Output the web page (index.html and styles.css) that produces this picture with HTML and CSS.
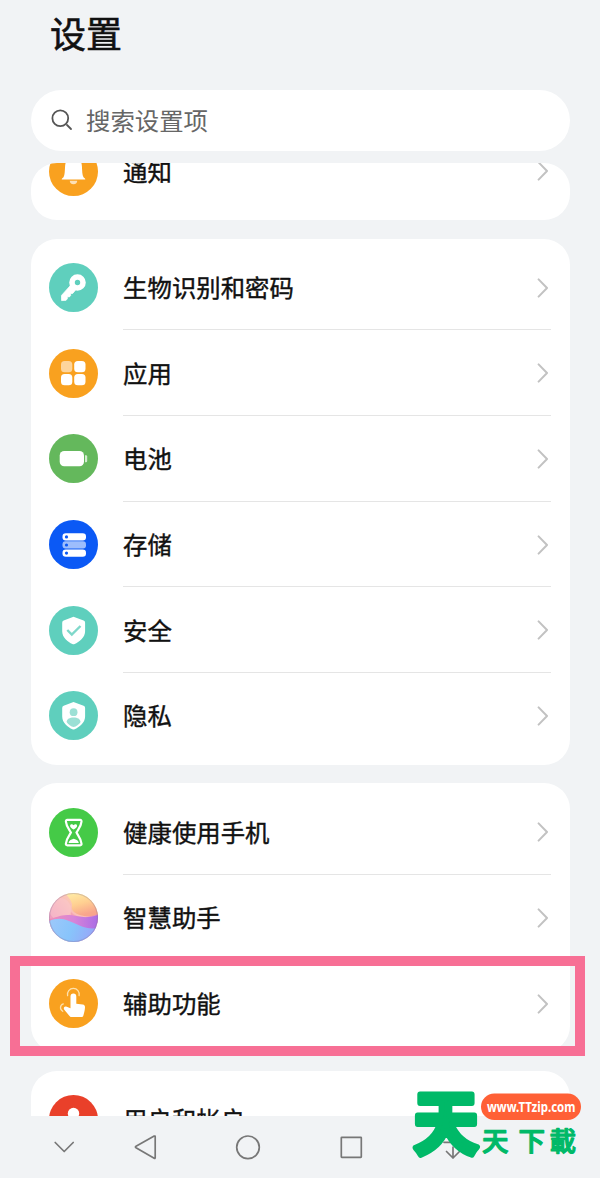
FILE: index.html
```html
<!DOCTYPE html>
<html lang="zh-CN">
<head>
<meta charset="utf-8">
<title>设置</title>
<link rel="stylesheet" href="styles.css">
</head>
<body>
<svg class="defs" aria-hidden="true">
  <symbol id="chevron" viewBox="0 0 12 20"><path d="M1.600 1.400 10 10 1.600 18.600" fill="none" stroke="#c2c2c2" stroke-width="2" stroke-linecap="round" stroke-linejoin="round"/></symbol>
</svg>
<div class="screen">
  <h1 class="title">设置</h1>
  <div class="search">
    <svg class="search-icon" viewBox="0 0 22 22"><circle cx="9.300" cy="9.300" r="7.900"/><path d="m16 16 4 4"/></svg>
    <span>搜索设置项</span>
  </div>
  <main class="list">
    <section class="card card-clipped">
      <div class="row">
        <svg class="icon" viewBox="0 0 49 49"><circle cx="24.500" cy="24.500" r="24.500" fill="#f9a11f"/><path d="M24.500 10c-6 0-8 4-8.400 9-.3 5-.3 9-1.600 11.200-.7 1-1.800 1.100-1.800 2.300h23.600c0-1.200-1.100-1.300-1.800-2.300C33.200 28 33.200 24 32.900 19c-.4-5-2.400-9-8.400-9z" fill="#fff"/><path d="M20.800 33.800h7.400a3.700 3.400 0 0 1-7.400 0z" fill="#fde0b5"/></svg>
        <div class="label"><span>通知</span><svg class="chevron"><use href="#chevron"/></svg></div>
      </div>
    </section>
    <section class="card">
      <div class="row">
        <svg class="icon" viewBox="0 0 49 49"><circle cx="24.500" cy="24.500" r="24.500" fill="#5fcfbd"/><circle cx="28.500" cy="19.500" r="5.500" fill="none" stroke="#fff" stroke-width="5.600"/><path d="m22.100 21.800-9.600 10.600.1 5.200 4.500-.3 1.300-1.700-.2-1.900 2.200.2 1.300-1.500-.2-2 2.100.1 2.800-3.300z" fill="#fff" stroke="#fff" stroke-width=".8" stroke-linejoin="round"/></svg>
        <div class="label"><span>生物识别和密码</span><svg class="chevron"><use href="#chevron"/></svg></div>
      </div>
      <div class="row">
        <svg class="icon" viewBox="0 0 49 49"><circle cx="24.500" cy="24.500" r="24.500" fill="#f9a11f"/><g fill="#fff"><rect x="12" y="12" width="11.300" height="11.300" rx="3.600" fill="#fdd59c"/><rect x="25.200" y="12" width="11.300" height="11.300" rx="3.600"/><rect x="12" y="25" width="11.300" height="11.300" rx="3.600"/><rect x="25.200" y="25" width="11.300" height="11.300" rx="3.600"/></g></svg>
        <div class="label"><span>应用</span><svg class="chevron"><use href="#chevron"/></svg></div>
      </div>
      <div class="row">
        <svg class="icon" viewBox="0 0 49 49"><circle cx="24.500" cy="24.500" r="24.500" fill="#64b85c"/><rect x="10.700" y="17" width="24.300" height="15.300" rx="4.500" fill="#fff"/><path d="M36 21.200h1q1.200 0 1.200 1.200v4.600q0 1.200-1.200 1.200h-1z" fill="#d3ebd0"/></svg>
        <div class="label"><span>电池</span><svg class="chevron"><use href="#chevron"/></svg></div>
      </div>
      <div class="row">
        <svg class="icon" viewBox="0 0 49 49"><circle cx="24.500" cy="24.500" r="24.500" fill="#0b59f5"/><rect x="13.500" y="13.200" width="23.500" height="7.300" rx="3.300" fill="#fff"/><rect x="13.500" y="21.300" width="23.500" height="7.300" rx="3" fill="#9dbdfc"/><rect x="13.500" y="29.500" width="23.500" height="7.300" rx="3.300" fill="#fff"/><g fill="#0b59f5"><circle cx="17.500" cy="16.900" r="1.600"/><circle cx="17.500" cy="25" r="1.600"/><circle cx="17.500" cy="33.100" r="1.600"/></g></svg>
        <div class="label"><span>存储</span><svg class="chevron"><use href="#chevron"/></svg></div>
      </div>
      <div class="row">
        <svg class="icon" viewBox="0 0 49 49"><circle cx="24.500" cy="24.500" r="24.500" fill="#5fcfbd"/><path d="M24.500 10.800 34.600 14.500q1.500.6 1.500 2.200v8.500c0 6.300-6 10.800-10.500 12.800q-1.100.5-2.200 0C19 36 13.200 31.500 13.200 25.200v-8.500q0-1.600 1.500-2.200z" fill="#fff"/><path d="m18.300 24 4.500 4.500 8.700-8.500" fill="none" stroke="#7fd8ca" stroke-width="2.400"/></svg>
        <div class="label"><span>安全</span><svg class="chevron"><use href="#chevron"/></svg></div>
      </div>
      <div class="row">
        <svg class="icon" viewBox="0 0 49 49"><circle cx="24.500" cy="24.500" r="24.500" fill="#5fcfbd"/><path d="M24.500 11 34.600 14.700q1.500.6 1.500 2.200v8.500c0 6.300-6 10.800-10.500 12.800q-1.100.5-2.200 0C19 36.200 13.200 31.700 13.200 25.400v-8.500q0-1.600 1.500-2.200z" fill="#fff"/><g fill="#9be0d5"><circle cx="24.600" cy="21.200" r="3.900"/><path d="M24.600 26.500c4 0 6.700 1.500 7 4.400-1.500 2.500-4.500 4.600-7 5.200-2.500-.6-5.500-2.700-7-5.200.3-2.900 3-4.400 7-4.400z"/></g></svg>
        <div class="label"><span>隐私</span><svg class="chevron"><use href="#chevron"/></svg></div>
      </div>
    </section>
    <section class="card">
      <div class="row">
        <svg class="icon" viewBox="0 0 49 49"><circle cx="24.500" cy="24.500" r="24.500" fill="#45ca47"/><path d="M18.300 11.900h12.800q1.600 0 1.400 1.700c-.5 5.400-3.500 7.900-5 11 1.500 3.100 4.500 5.500 5 11q.2 1.700-1.400 1.700H18.300q-1.600 0-1.400-1.700c.5-5.500 3.500-7.900 5-11-1.500-3.100-4.500-5.600-5-11q-.2-1.700 1.400-1.700z" fill="none" stroke="#fff" stroke-width="2.200"/><path d="M24.600 21.600c-1.800-1.200-3.800-2.500-3.500-4.200.4-1.600 2.500-1.600 3.500-.2 1-1.400 3.100-1.400 3.500.2.300 1.700-1.700 3-3.500 4.200zM19.600 34.900c.2-2.200 2.200-3.400 5.100-4.200 2.900.8 4.900 2 5.100 4.200z" fill="#fff"/></svg>
        <div class="label"><span>健康使用手机</span><svg class="chevron"><use href="#chevron"/></svg></div>
      </div>
      <div class="row">
        <svg class="icon" viewBox="0 0 49 49">
          <defs>
            <linearGradient id="warm" x1="0" y1=".7" x2=".8" y2="0"><stop offset=".2" stop-color="#f09fc0"/><stop offset=".6" stop-color="#fbc3b8"/><stop offset="1" stop-color="#ffe89c"/></linearGradient>
            <linearGradient id="sun" x1="0" y1="0" x2=".4" y2="1"><stop offset="0" stop-color="#fff0a8"/><stop offset=".55" stop-color="#ffcf91"/><stop offset="1" stop-color="#f8a58c"/></linearGradient>
            <linearGradient id="violet" x1="0" y1="0" x2="1" y2="0"><stop offset="0" stop-color="#f08fb8"/><stop offset=".5" stop-color="#d884d8"/><stop offset="1" stop-color="#aa6ce6"/></linearGradient>
            <linearGradient id="blue" x1="0" y1=".2" x2="1" y2=".4"><stop offset="0" stop-color="#9cc8fa"/><stop offset=".5" stop-color="#88c4fb"/><stop offset="1" stop-color="#98a4f8"/></linearGradient>
            <linearGradient id="coral" x1="0" y1="0" x2="1" y2="0"><stop offset=".3" stop-color="#f4a3b4"/><stop offset="1" stop-color="#e98bb4"/></linearGradient>
            <clipPath id="disc"><circle cx="24.500" cy="24.500" r="24.500"/></clipPath>
          </defs>
          <g clip-path="url(#disc)"><path d="M0 0h49v49H0z" fill="url(#warm)"/><circle cx="11" cy="16" r="11" fill="#fac9cd" opacity=".55"/><path d="M16 0h33v22c-8 2-18 2-24-3-3-3-2-5-2-8-1-4-4-8-7-11z" fill="url(#sun)"/><path d="M22 19c5 6 16 6 27 2v10H22z" fill="url(#coral)"/><path d="M0 26c6-1 11-4 18-4 11 0 16 5 31 0v19H0z" fill="url(#violet)"/><path d="M0 28c7-3 13-3 20 0 10 4 17 9 29 7v14H0z" fill="url(#blue)"/></g><circle cx="24.500" cy="24.500" r="24" fill="none" stroke="#85759b" stroke-opacity=".35"/>
        </svg>
        <div class="label"><span>智慧助手</span><svg class="chevron"><use href="#chevron"/></svg></div>
      </div>
      <div class="row row-selected">
        <svg class="icon" viewBox="0 0 49 49"><circle cx="24.500" cy="24.500" r="24.500" fill="#f9a11f"/><path d="M21.500 29.300V17.400a2.900 2.900 0 0 1 5.800 0v7.300l6.400.8c1.700.3 2.400 1.300 2.300 3-.2 3.400-.9 5.300-1.700 8.200-.3 1-1 1.400-2 1.400H22.500c-1.100 0-1.500-.5-2.200-1.300l-5-6c-1.200-1.700-.2-3.400 1.800-3.200z" fill="#fff"/><g fill="none" stroke="#fde0ad" stroke-width="1.300" stroke-linecap="round"><path d="M18.600 16.600a5.900 5.900 0 1 1 11.500 0M14.300 24.800c-3.300.9-3.900 5.500-.6 7.500"/></g></svg>
        <div class="label"><span>辅助功能</span><svg class="chevron"><use href="#chevron"/></svg></div>
        <div class="highlight"></div>
      </div>
    </section>
    <section class="card">
      <div class="row">
        <svg class="icon" viewBox="0 0 49 49"><circle cx="24.500" cy="24.500" r="24.500" fill="#e9402a"/><circle cx="24.500" cy="18.500" r="5.700" fill="#fff"/><path d="M12 37c0-15 25-15 25 0z" fill="#fff"/></svg>
        <div class="label"><span>用户和帐户</span></div>
      </div>
    </section>
  </main>
  <nav class="navbar">
    <svg viewBox="0 0 28 28"><path d="m5.200 9.500 9 9 9-9"/></svg>
    <svg viewBox="0 0 28 28"><path d="M4 13.200 22.200 3.100q1-.4 1 .6v21.100q0 1-1 .5L4 14.800q-1.200-.8 0-1.600z"/></svg>
    <svg viewBox="0 0 28 28"><circle cx="14" cy="14.300" r="11.300"/></svg>
    <svg viewBox="0 0 28 28"><rect x="4.300" y="4.300" width="20" height="20" rx=".5"/></svg>
    <svg viewBox="0 0 28 28"><path d="M5 3.500h18M5 9.300h18M14 14v11m-6.500-6.500L14 25l6.500-6.500"/></svg>
  </nav>
  <svg class="watermark" viewBox="0 0 180 76">
    <text class="mark-big" x="0" y="0" transform="translate(5.500 63.500) scale(1 1.060)">天</text>
    <rect x="73" y="8.500" width="100" height="26.500" rx="13.250" fill="#ff6036"/>
    <text class="mark-url" x="79" y="27" textLength="88.500" lengthAdjust="spacingAndGlyphs">www.TTzip.com</text>
    <text class="mark-small" x="74 110.500 141.500" y="65.500">天下載</text>
  </svg>
</div>
</body>
</html>
```

FILE: styles.css
```css
* { box-sizing: border-box; }
body {
  margin: 0;
  background: #f1f3f5;
  color: #111;
  font-family: "Noto Sans CJK SC", sans-serif;
}
.defs { display: none; }
.screen {
  position: relative;
  display: flex;
  flex-direction: column;
  width: 600px;
  height: 1178px;
  overflow: hidden;
}
.title {
  flex: none;
  height: 90px;
  margin: 0;
  padding: 5px 0 0 50px;
  font-size: 36px;
  line-height: 54px;
  font-weight: 400;
  -webkit-text-stroke: .6px #111;
}
.search {
  flex: none;
  display: flex;
  align-items: center;
  gap: 13px;
  height: 60.500px;
  margin: 0 30px 12.500px 31px;
  padding-left: 20px;
  border-radius: 31px;
  background: #fff;
  color: #666;
  font-size: 24.400px;
}
.search span { margin-top: -2px; }
.search-icon {
  width: 22px;
  height: 22px;
  fill: none;
  stroke: #555;
  stroke-width: 1.800;
  stroke-linecap: round;
}
.list {
  flex: none;
  display: flex;
  flex-direction: column;
  gap: 18.500px;
  height: 953px;
  padding: 0 30px 0 31px;
  overflow: hidden;
}
.card {
  flex: none;
  padding: 6px 19px 6px 18px;
  border-radius: 26px;
  background: #fff;
}
.card-clipped {
  display: flex;
  flex-direction: column;
  justify-content: flex-end;
  height: 57.200px;
  overflow: hidden;
}
.row {
  position: relative;
  flex: none;
  display: flex;
  align-items: center;
  gap: 25px;
  height: 85.700px;
}
.icon { flex: none; width: 49px; height: 49px; }
.label {
  flex: 1;
  display: flex;
  align-items: center;
  justify-content: space-between;
  height: 100%;
  margin-left: -.500px;
  padding-right: 2px;
  background: linear-gradient(#e5e5e5, #e5e5e5) bottom / 100% 1px no-repeat;
  font-size: 24.400px;
  font-weight: 400;
  -webkit-text-stroke: .4px #111;
}
.label span { margin-bottom: 2px; padding-left: .600px; }
.row:last-child .label, .row:has(+ .row-selected) .label { background: none; }
.chevron { width: 12px; height: 20px; }
.highlight {
  position: absolute;
  inset: -5px -34px -10px -39.500px;
  border: 10px solid #f76f95;
}
.navbar {
  flex: 1;
  display: flex;
  gap: 74.300px;
  padding: 17px 0 0 50px;
}
.navbar svg {
  width: 28px;
  height: 28px;
  fill: none;
  stroke: #777;
  stroke-width: 1.700;
  stroke-linejoin: round;
  stroke-linecap: round;
}
.navbar svg:first-child { margin-right: -20.300px; }
.watermark {
  position: absolute;
  left: 408px;
  top: 1085px;
  width: 180px;
  height: 76px;
  overflow: visible;
}
.mark-big, .mark-small {
  fill: #00b968;
  stroke: #00b968;
  stroke-linejoin: round;
  font-family: "Noto Sans CJK TC", sans-serif;
}
.mark-big { font-size: 65px; font-weight: 700; stroke-width: 5.500px; }
.mark-small { font-size: 26.500px; font-weight: 500; stroke-width: 1.200px; }
.mark-url {
  fill: #fff;
  font-family: "Noto Sans", sans-serif;
  font-size: 14.500px;
  font-weight: 700;
}
```
